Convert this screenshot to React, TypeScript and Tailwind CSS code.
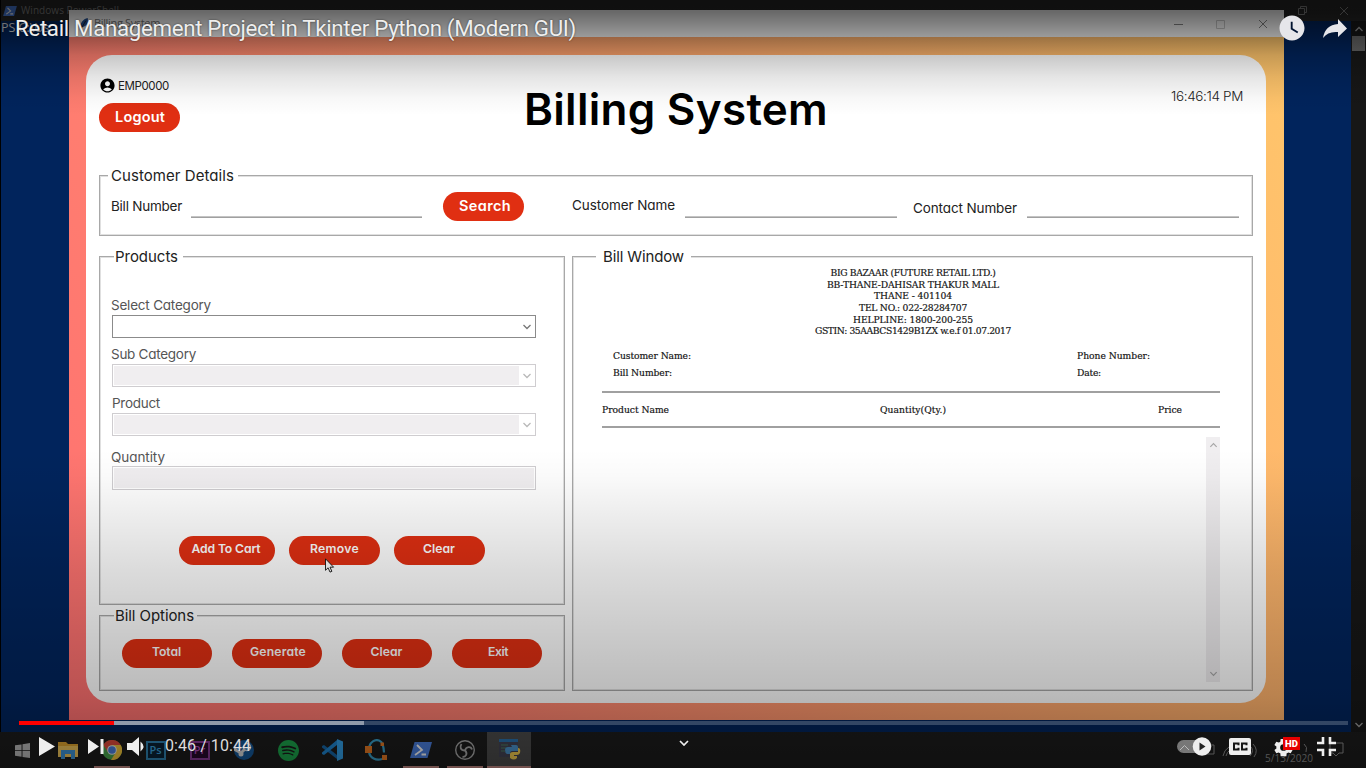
import { useLayoutEffect, useRef, useState } from "react";
import { MdAccountCircle, MdWatchLater } from "react-icons/md";
import { SiSpotify } from "react-icons/si";

type LabelProps = { children: string; width: number; className?: string };

/* Single-line text whose tracking is adjusted so that it fills `width`. */
function Label({ children, width, className = "" }: LabelProps) {
  const ref = useRef<HTMLSpanElement>(null);
  const [spacing, setSpacing] = useState(0);
  useLayoutEffect(() => {
    const el = ref.current;
    if (el) setSpacing((width - el.getBoundingClientRect().width) / children.length);
  }, [children, width]);
  return (
    <span ref={ref} className={`inline-block whitespace-nowrap leading-none ${className}`} style={{ letterSpacing: spacing }}>
      {children}
    </span>
  );
}

const ui = "font-['Inter',sans-serif] [font-feature-settings:'cv11']";
const slab = "font-['DejaVu_Serif',serif] text-[9.2px] text-[#111] [-webkit-text-stroke:0.2px_#222]";

function Pill({ text, width, className = "" }: { text: string; width: number; className?: string }) {
  return (
    <button className={`flex shrink-0 justify-center rounded-full bg-[#e02f12] text-white font-semibold ${className}`}>
      <Label width={width}>{text}</Label>
    </button>
  );
}

function Group({ title, titleWidth, legendClass, className, children }: { title: string; titleWidth: number; legendClass: string; className: string; children: React.ReactNode }) {
  return (
    <section className={`relative border border-[#a8a8a8] shadow-[inset_0_0_0_1px_#e0e0e0] ${className}`}>
      <h2 className={`absolute -top-[10px] flex h-[18px] items-center bg-white text-[15px] text-[#222] ${legendClass}`}>
        <Label width={titleWidth}>{title}</Label>
      </h2>
      {children}
    </section>
  );
}

function Chevron({ className = "", up = false }: { className?: string; up?: boolean }) {
  return (
    <svg viewBox="0 0 10 6" className={className} fill="none" stroke="currentColor" strokeWidth="1.3">
      <path d={up ? "M1.5 5 5 1.5 8.5 5" : "M1.5 1 5 4.5 8.5 1"} />
    </svg>
  );
}

function Select({ disabled = false }: { disabled?: boolean }) {
  return (
    <div className={`flex h-[23px] w-[424px] border p-px ${disabled ? "border-[#cfcdd0]" : "border-[#8b8b8b]"}`}>
      <div className={`flex-1 ${disabled ? "bg-[#f0eef0]" : "bg-white"}`} />
      <div className={`flex w-[15px] items-center justify-end pt-px pr-[2px] ${disabled ? "text-[#b9b9b9]" : "text-[#777]"}`}>
        <Chevron className="h-[6px] w-[10px]" />
      </div>
    </div>
  );
}

function PowerShellIcon({ className }: { className: string }) {
  return (
    <svg viewBox="0 0 22 16" className={className}>
      <path d="M4.5 0H22L17.5 16H0Z" fill="#4a7fe0" />
      <path d="m7 3 5 5-7 5M11.5 12.5h4.5" fill="none" stroke="#fff" strokeWidth="1.8" />
    </svg>
  );
}

function TerminalWindow() {
  return (
    <div className="absolute top-0 left-px flex h-[732px] w-[1365px] flex-col bg-[#01245c] font-['Open_Sans',sans-serif]">
      <div className="flex h-[21px] shrink-0 items-center bg-[#262626] pl-[2px] text-[10px] text-[#808080]">
        <PowerShellIcon className="h-[10px] w-[14px]" />
        <span className="ml-1">
          <Label width={98}>Windows PowerShell</Label>
        </span>
        <svg viewBox="0 0 92 12" className="mr-[18px] ml-auto h-3 w-[92px]" fill="none" stroke="#808080">
          <path d="M0 6h9M42.500 3.500h6v6h-6zM44.500 3.500v-2h6v6h-2M84 2l8 8M92 2l-8 8" />
        </svg>
      </div>
      <div className="flex flex-1">
        <div className="flex-1 text-[12.5px] leading-[13px] text-[#ddd]">PS C:\Us</div>
        <div className="flex w-[15px] flex-col items-center bg-[#171717] pt-[5px] pb-[4px] text-[#999]">
          <Chevron up className="h-[6px] w-[10px]" />
          <div className="mt-1 h-[15px] w-[13px] bg-[#666]" />
          <Chevron className="mt-auto h-[6px] w-[10px]" />
        </div>
      </div>
    </div>
  );
}

function Rule({ className }: { className: string }) {
  return <div className={`mt-[40px] h-[2px] border-t border-[#c4c4c4] bg-[#a0a0a0] ${className}`} />;
}

function CustomerDetails() {
  return (
    <Group title="Customer Details" titleWidth={123} legendClass="left-[8px] pl-[3px] pr-[4px]" className="mt-[43px] flex h-[61px] items-start pl-[11px] text-[13.5px] text-[#222]">
      <span className="mt-[20px] w-[80px]"><Label width={71}>Bill Number</Label></span>
      <Rule className="w-[231px]" />
      <Pill text="Search" width={52} className="mt-[16px] ml-[21px] h-[29px] w-[81px] items-center pl-[3px] text-[14.5px]" />
      <span className="mt-[19px] ml-[48px] w-[113px]"><Label width={103}>Customer Name</Label></span>
      <Rule className="w-[212px]" />
      <span className="mt-[22px] ml-[16px] w-[114px]"><Label width={104}>Contact Number</Label></span>
      <Rule className="w-[212px]" />
    </Group>
  );
}

function Products() {
  return (
    <Group title="Products" titleWidth={63} legendClass="left-[14px] pl-px pr-[5px]" className="flex h-[349px] flex-col pl-[12px] text-[13.5px] text-[#555]">
      <div className="mt-[38px] -ml-px h-[20px]"><Label width={100}>Select Category</Label></div>
      <Select />
      <div className="mt-[6px] -ml-px h-[20px]"><Label width={85}>Sub Category</Label></div>
      <Select disabled />
      <div className="mt-[6px] h-[20px]"><Label width={48}>Product</Label></div>
      <Select disabled />
      <div className="mt-[11px] -ml-px h-[19px]"><Label width={54}>Quantity</Label></div>
      <div className="h-[24px] w-[424px] border border-[#cfcdd0] p-px">
        <div className="h-full bg-[#f0eef0]" />
      </div>
      <div className="mt-[46px] ml-[67px] flex text-[12.2px]">
        <Pill text="Add To Cart" width={69} className="h-[29px] w-[96px] pt-[7px] pr-[2px]" />
        <Pill text="Remove" width={49} className="ml-[14px] h-[29px] w-[91px] pt-[7px]" />
        <Pill text="Clear" width={32} className="ml-[14px] h-[29px] w-[91px] pt-[7px] pr-px" />
      </div>
    </Group>
  );
}

function BillOptions() {
  return (
    <Group title="Bill Options" titleWidth={79} legendClass="left-[14px] pl-px pr-[3px]" className="mt-[10px] flex h-[76px] gap-[20px] pt-[23px] pl-[22px] text-[12.2px]">
      <Pill text="Total" width={29} className="h-[29px] w-[90px] pt-[7px] pr-px" />
      <Pill text="Generate" width={56} className="h-[29px] w-[90px] pt-[7px] pl-[2px]" />
      <Pill text="Clear" width={32} className="h-[29px] w-[90px] pt-[7px] pr-px" />
      <Pill text="Exit" width={20} className="h-[29px] w-[90px] pt-[7px] pl-[2px]" />
    </Group>
  );
}

const storeLines: [string, number][] = [
  ["BIG BAZAAR (FUTURE RETAIL LTD.)", 165],
  ["BB-THANE-DAHISAR THAKUR MALL", 172],
  ["THANE - 401104", 78],
  ["TEL NO.: 022-28284707", 108],
  ["HELPLINE: 1800-200-255", 120],
  ["GSTIN: 35AABCS1429B1ZX w.e.f 01.07.2017", 196],
];

function BillWindow() {
  return (
    <Group title="Bill Window" titleWidth={81} legendClass="left-[23px] pl-[7px] pr-[7px]" className="flex h-[435px] w-[681px] flex-col pl-[29px]">
      <div className={`mt-[10px] flex w-[622px] flex-col items-center ${slab}`}>
        {storeLines.map(([text, width]) => (
          <div key={text} className="flex h-[11.6px] items-center"><Label width={width}>{text}</Label></div>
        ))}
      </div>
      <div className={`mt-[11px] grid grid-cols-[464px_1fr] pl-[11px] ${slab}`}>
        <div className="flex h-[17px] items-center"><Label width={78}>Customer Name:</Label></div>
        <div className="flex h-[17px] items-center"><Label width={73}>Phone Number:</Label></div>
        <div className="flex h-[17px] items-center"><Label width={59}>Bill Number:</Label></div>
        <div className="flex h-[17px] items-center"><Label width={24}>Date:</Label></div>
      </div>
      <div className={`mt-[9px] flex h-[37px] w-[618px] items-center border-y-2 border-[#a0a0a0] pt-px ${slab}`}>
        <span className="flex w-[278px]"><Label width={67}>Product Name</Label></span>
        <span className="flex w-[278px]"><Label width={66}>Quantity(Qty.)</Label></span>
        <Label width={24}>Price</Label>
      </div>
      <div className="mt-[9px] ml-[604px] flex h-[245px] w-[14px] flex-col items-center justify-between bg-[#f0eef0] py-[5px] text-[#a6a6a6]">
        <Chevron up className="h-[6px] w-[9px]" />
        <Chevron className="h-[6px] w-[9px]" />
      </div>
    </Group>
  );
}

function BillingApp() {
  return (
    <div className={`absolute top-[10px] left-[69px] flex h-[710px] w-[1215px] flex-col ${ui}`}>
      <div className="flex h-[27px] shrink-0 items-center bg-white pl-[10px] font-['Open_Sans',sans-serif] text-[11px] text-[#777]">
        <svg viewBox="0 0 10 14" className="h-[13px] w-[10px]">
          <path d="M1 13C0 7 4 2 9 1c1 5-1 9-6 10Z" fill="#23539a" />
          <path d="M1.500 13 7 4" stroke="#111" strokeWidth=".8" />
        </svg>
        <span className="ml-[5px]"><Label width={66}>Billing System</Label></span>
        <svg viewBox="0 0 94 10" className="mr-[16px] ml-auto h-[10px] w-[94px]" fill="none" stroke="#888">
          <path d="M0 5.500h9M85 1l8 8M93 1l-8 8" />
          <path d="M42.500 1.500h8v8h-8z" stroke="#ccc" />
        </svg>
      </div>
      <div className="flex-1 bg-[linear-gradient(60deg,#ff7070_0%,#ff7f70_25%,#ffa06c_54%,#ffb06c_72%,#ffc66b_100%)] px-[17px] pt-[18px]">
        <main className="h-[648px] w-[1180px] rounded-[26px] bg-white pr-[13px] pl-[13px]">
          <header className="flex h-[77px] items-start">
            <div className="w-[425px] pt-[22px]">
              <div className="flex h-[16px] items-center gap-[2px] text-[11.5px] text-[#222]">
                <MdAccountCircle className="size-[17px] text-black" />
                <span className="flex pt-[4px]"><Label width={51}>EMP0000</Label></span>
              </div>
              <Pill text="Logout" width={50} className="mt-[10px] h-[29px] w-[81px] items-center pl-px text-[14.5px]" />
            </div>
            <h1 className="flex w-[302px] pt-[32px] text-[44px] font-semibold text-black"><Label width={304}>Billing System</Label></h1>
            <div className="ml-[345px] flex pt-[35px] text-[13.5px] font-light text-[#222]"><Label width={72}>16:46:14 PM</Label></div>
          </header>
          <CustomerDetails />
          <div className="mt-[20px] flex justify-between">
            <div className="w-[466px]">
              <Products />
              <BillOptions />
            </div>
            <BillWindow />
          </div>
        </main>
      </div>
    </div>
  );
}

function TaskItem({ children, className = "w-[44px] border-transparent" }: { children: React.ReactNode; className?: string }) {
  return <div className={`flex h-[36px] shrink-0 items-center justify-center border-b-2 pt-[2px] ${className}`}>{children}</div>;
}

function Taskbar() {
  return (
    <div className="absolute top-[732px] left-0 flex h-[36px] w-[1366px] bg-[#1c1c1c]">
      <TaskItem>
        <svg viewBox="0 0 16 16" className="size-[15px]" fill="#bbb"><path d="M0 2.500 7 1.500V7.600H0ZM8 1.300 16 0v7.600H8ZM0 8.500h7v6.100l-7-1ZM8 8.500h8V16l-8-1.200Z" /></svg>
      </TaskItem>
      <TaskItem>
        <svg viewBox="0 0 20 18" className="ml-[3px] h-[18px] w-[20px]"><path d="M0 1h8l2 2h10v13H0Z" fill="#e0a52f" /><path d="M0 5h20v11H0Z" fill="#f2c75c" /><path d="M3 18V9h14v9h-4v-5H7v5Z" fill="#3d94d8" /></svg>
      </TaskItem>
      <TaskItem className="mr-[2px] ml-[6px] w-[36px] border-[#c58b85]">
        <svg viewBox="0 0 20 20" className="size-[20px]"><circle cx="10" cy="10" r="10" fill="#4aa74e" /><path d="M1.300 5A10 10 0 0 1 18.700 5H10L6 12Z" fill="#e14b3c" /><path d="M10 5h8.700A10 10 0 0 1 9 20l5-8Z" fill="#f5c73c" /><circle cx="10" cy="10" r="4.800" fill="#eee" /><circle cx="10" cy="10" r="3.800" fill="#4a80e0" /></svg>
      </TaskItem>
      <TaskItem>
        <span className="ml-[3px] flex h-[19px] w-[20px] items-center justify-center border-2 border-[#2f83b2] bg-[#0a2236] font-['Open_Sans',sans-serif] text-[11px] font-semibold text-[#3aa3dc]">Ps</span>
      </TaskItem>
      <TaskItem>
        <span className="ml-[3px] flex h-[19px] w-[20px] items-center justify-center border-2 border-[#8a3c98] bg-[#27092d] font-['Open_Sans',sans-serif] text-[11px] font-semibold text-[#b04cc0]">Pr</span>
      </TaskItem>
      <TaskItem>
        <svg viewBox="0 0 20 20" className="ml-[3px] size-[20px]"><circle cx="10" cy="10" r="10" fill="#155a9c" /><path d="m0 9 7 4 5-5" stroke="#ddd" strokeWidth="3" fill="none" /><circle cx="13" cy="7" r="3.500" fill="#155a9c" stroke="#ddd" strokeWidth="1.500" /><circle cx="7" cy="14" r="2.500" fill="#ddd" /></svg>
      </TaskItem>
      <TaskItem><SiSpotify className="ml-[4px] size-[21px] text-[#1ca54c]" /></TaskItem>
      <TaskItem>
        <svg viewBox="0 0 22 22" className="ml-[3px] size-[22px]"><path d="m1 7 2-1 13 10v4L1 8.500Z" fill="#1667a8" /><path d="m1 15 2 1L16 6V1L1 13.500Z" fill="#1f85cf" /><path d="m16 0 6 2.500v17L16 22Z" fill="#32a0e8" /></svg>
      </TaskItem>
      <TaskItem>
        <svg viewBox="0 0 22 22" className="ml-[3px] size-[22px]"><path d="M4 8C5 3 10 0 14 1.500s4.500 6 5 12M4 13c1 6 7 9 13 7" fill="none" stroke="#38a0cb" strokeWidth="2.200" /><path d="M0 7h7v7H0ZM15.500 3.500h3.500v3.500h-3.500ZM17 16h5v5h-5Z" fill="#e87a24" /></svg>
      </TaskItem>
      <TaskItem className="ml-[7px] w-[36px] border-[#c58b85]"><PowerShellIcon className="h-[16px] w-[22px]" /></TaskItem>
      <TaskItem className="ml-[8px] w-[36px] border-[#c58b85]">
        <svg viewBox="0 0 20 20" className="-ml-px size-[20px]" fill="none" stroke="#aaa"><circle cx="10" cy="10" r="9.300" strokeWidth="1.400" /><path d="M10 10.500C5.500 10.500 4.500 7 6.500 4M10 10.500c1-4 6-4.500 7-1M10 10.500c3 3 1 6.500-2.500 6.500" strokeWidth="1.800" /></svg>
      </TaskItem>
      <TaskItem className="ml-[4px] w-[44px] border-[#c58b85] bg-[#4c4c4c]">
        <svg viewBox="0 0 22 22" className="ml-px size-[22px]"><path d="M0 0h19v18H0Z" fill="#445" /><path d="M0 0h19v3H0Z" fill="#2a72ae" /><path d="M2 6h7M2 9h5M2 12h4" stroke="#4c8064" /><path d="M12 6h5q2 0 2 2v4h-6q-2 0-2 3H8q-2-1-2-4 0-3 3-3h4" fill="#4b94cd" /><path d="M19 9q3 0 2 5-1 2-3 2h-3v1h3v2q-3 3-7 0v-4q0-2 3-2h5Z" fill="#f5ce50" /></svg>
      </TaskItem>
      <div className="ml-auto flex items-start pt-[8px] text-[#8c8c8c]">
        <svg viewBox="0 0 188 28" className="h-[28px] w-[188px]" fill="none" stroke="currentColor">
          <path d="m2 12 4.500-4.500L11 12M28 5h8v9h-8M45 16q1-6 6-9M48 16q1-4 4-6M72 6q5 4 0 10M75 4q6 6 1 13M126 4q4 3 2 8M152 3h13v10h-4l-3 3-3-3h-3Z" />
          <text x="87" y="22" fill="currentColor" stroke="none" className="font-['Open_Sans',sans-serif] text-[10px]" textLength="48">5/13/2020</text>
        </svg>
      </div>
    </div>
  );
}

function PlayerOverlay() {
  return (
    <div className="absolute inset-0 font-['Roboto',sans-serif] text-[#eee]">
      <div className="absolute top-[16px] left-[15px] flex h-[24px] items-center text-[22.3px] [text-shadow:0_0_2px_rgba(0,0,0,.6)]">
        <Label width={561}>Retail Management Project in Tkinter Python (Modern GUI)</Label>
      </div>
      <MdWatchLater className="absolute top-[13px] left-[1277px] size-[30px] text-[#e6e6ea]" />
      <svg viewBox="0 0 24 20" className="absolute top-[19px] left-[1323px] h-[20px] w-[24px]" fill="#e6e6ea"><path d="M15 0 24 9.500 15 18v-5Q5 12 0 19 2 6 15 5Z" /></svg>
      <div className="absolute top-[721px] left-[19px] flex h-[4px] w-[1329px] bg-white/20">
        <div className="h-full w-[95px] bg-[#f00]" />
        <div className="h-full w-[250px] bg-white/45" />
      </div>
      <svg viewBox="0 0 110 20" className="absolute top-[737px] left-[38px] h-[20px] w-[110px]" fill="#eee">
        <path d="M1 0 17 9.500 1 19ZM50 2 61 9.500 50 17ZM62.500 2h3v15h-3ZM89 6h5l7-6v19l-7-6h-5ZM102.500 4.500q6 5 0 10Z" />
      </svg>
      <div className="absolute top-[737px] left-[165px] flex h-[18px] items-center text-[16px] text-[#ddd]"><Label width={86}>0:46 / 10:44</Label></div>
      <svg viewBox="0 0 10 6" className="absolute top-[740px] left-[679px] h-[6px] w-[10px]" fill="none" stroke="#eee" strokeWidth="1.700"><path d="m1 1 4 4 4-4" /></svg>
      <svg viewBox="0 0 36 20" className="absolute top-[737px] left-[1177px] h-[20px] w-[36px]"><rect y="3" width="30" height="13" rx="6.500" fill="#777" /><path d="m3 13 4.500-4.500L12 13" fill="none" stroke="#bbb" /><circle cx="25" cy="9.500" r="9.300" fill="#eee" /><path d="m22.500 5.500 6 4-6 4Z" fill="#222" /></svg>
      <svg viewBox="0 0 22 17" className="absolute top-[738px] left-[1229px] h-[17px] w-[22px]" fill="none" stroke="#151515" strokeWidth="2"><rect width="22" height="17" rx="2" fill="#eee" stroke="none" /><path d="M9.500 7.200V5.500H5v6h4.500V9.800M17.500 7.200V5.500H13v6h4.500V9.800" /></svg>
      <svg viewBox="0 0 24 24" className="absolute top-[736px] left-[1272px] size-[23px]" fill="#eee"><path fillRule="evenodd" d="M19.400 13a7.500 7.500 0 0 0 0-2l2.100-1.600-2-3.500-2.500 1a7 7 0 0 0-1.700-1L15 3H9l-.3 2.900a7 7 0 0 0-1.700 1l-2.500-1-2 3.500L4.600 11a7.500 7.500 0 0 0 0 2l-2.100 1.600 2 3.500 2.500-1a7 7 0 0 0 1.700 1L9 21h6l.3-2.900a7 7 0 0 0 1.700-1l2.500 1 2-3.500ZM12 15.500a3.500 3.500 0 1 1 0-7 3.500 3.500 0 0 1 0 7Z" /></svg>
      <div className="absolute top-[737px] left-[1283px] flex h-[13px] w-[17px] items-center justify-center bg-[#e60000] text-[9.5px] font-black text-white"><span className="leading-none">HD</span></div>
      <svg viewBox="0 0 20 20" className="absolute top-[737px] left-[1317px] size-[20px]" fill="none" stroke="#eee" strokeWidth="2.600"><path d="M0 6h6V0M13 0v6h6M0 13h6v6M13 19v-6h6" /></svg>
    </div>
  );
}

export default function App() {
  return (
    <div className="relative h-[768px] w-[1366px] overflow-hidden bg-black">
      <TerminalWindow />
      <BillingApp />
      <svg viewBox="0 0 10 15" className="absolute top-[558px] left-[325px] h-[15px] w-[10px]"><path d="M.5.800v11.500l2.600-2.500 1.900 4.300 1.900-.8-1.900-4.100h3.600Z" fill="#fff" stroke="#111" strokeWidth=".9" /></svg>
      <Taskbar />
      <div className="absolute inset-x-0 top-0 h-[115px] bg-[linear-gradient(to_bottom,rgba(0,0,0,.62)_0px,rgba(0,0,0,.59)_12px,rgba(0,0,0,.4)_36px,rgba(0,0,0,.22)_55px,rgba(0,0,0,.1)_77px,rgba(0,0,0,.03)_98px,transparent_115px)]" />
      <div className="absolute inset-x-0 bottom-0 h-[318px] bg-[linear-gradient(to_bottom,transparent_0px,rgba(0,0,0,.02)_25px,rgba(0,0,0,.14)_120px,rgba(0,0,0,.27)_245px,rgba(0,0,0,.42)_318px)]" />
      <PlayerOverlay />
    </div>
  );
}
